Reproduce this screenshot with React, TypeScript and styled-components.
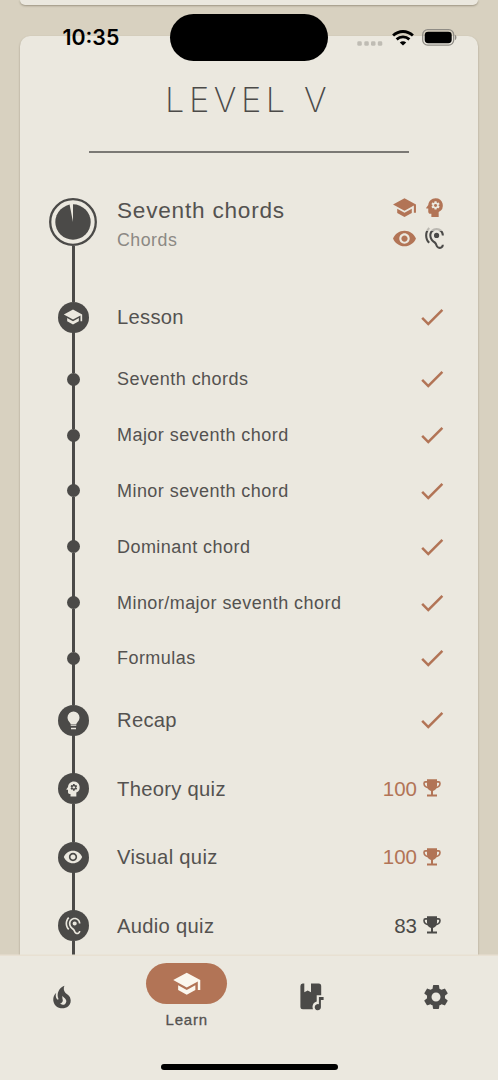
import React from "react";
import styled, { createGlobalStyle } from "styled-components";
import {
  MdSchool,
  MdPsychology,
  MdRemoveRedEye,
  MdHearing,
  MdCheck,
  MdSettings,
} from "react-icons/md";

const ink = "#4b4a48";
const textInk = "#545250";
const clay = "#b27456";
const paper = "#ebe8df";
const sand = "#d8d1c0";

const GlobalStyle = createGlobalStyle`
  * { box-sizing: border-box; }
  body { margin: 0; background: ${sand}; }
  svg { display: block; flex: none; }
`;

const Screen = styled.div`
  position: relative;
  width: 498px;
  height: 1080px;
  overflow: hidden;
  display: flex;
  flex-direction: column;
  background: ${sand};
  color: ${ink};
  font-family: "Liberation Sans", Arial, sans-serif;
`;

const Scroll = styled.main`
  flex: 1;
  min-height: 0;
  overflow: hidden;
  padding: 0 20px;
`;

const Card = styled.section`
  background: ${paper};
  border-radius: 10px;
  box-shadow: 0 1px 2px rgba(70, 60, 40, 0.4);
`;

const PreviousCard = styled(Card)`
  height: 5px;
  margin-bottom: 31px;
  border-radius: 0 0 10px 10px;
`;

const LevelCard = styled(Card)`
  height: 960px;
  padding: 42px 34px 0 29px;
`;

const LevelTitle = styled.h1`
  margin: 0;
  padding-left: 3px;
  height: 44px;
  text-align: center;
  font: 200 34.5px/44px Inter, sans-serif;
  letter-spacing: 4.5px;
`;

const Rule = styled.hr`
  width: 320px;
  height: 2px;
  margin: 29px 0 0 40px;
  border: 0;
  background: #7b7975;
`;

const Timeline = styled.div`
  margin-top: 40px;
`;

const Row = styled.div<{ $h: number }>`
  display: flex;
  align-items: center;
  height: ${(p) => p.$h}px;
`;

const Rail = styled.div`
  width: 48px;
  height: 100%;
  margin-right: 20px;
  display: flex;
  flex-direction: column;
  align-items: center;
  flex: none;
`;

const Line = styled.span<{ $hidden?: boolean }>`
  flex: 1;
  width: 3px;
  background: ${(p) => (p.$hidden ? "transparent" : ink)};
`;

const Node = styled.span<{ $size: number }>`
  width: ${(p) => p.$size}px;
  height: ${(p) => p.$size}px;
  border-radius: 50%;
  margin: -0.5px 0;
  background: ${ink};
  color: ${paper};
  display: flex;
  align-items: center;
  justify-content: center;
`;

const Label = styled.span<{ $size: number; $spacing: number }>`
  flex: 1;
  white-space: nowrap;
  color: ${textInk};
  font-size: ${(p) => p.$size}px;
  letter-spacing: ${(p) => p.$spacing}px;
  line-height: 28px;
`;

const TopicRow = styled.div`
  display: flex;
  height: 90px;
`;

const TopicText = styled.div`
  flex: 1;
  display: flex;
  flex-direction: column;
  padding-top: 3px;
`;

const TopicName = styled.h2`
  margin: 0;
  color: ${textInk};
  font-weight: 400;
  font-size: 22.6px;
  line-height: 29px;
  letter-spacing: 0.78px;
`;

const TopicGroup = styled.span`
  font-size: 17.8px;
  line-height: 30px;
  letter-spacing: 0.5px;
  color: #8c8984;
`;

const BadgeGrid = styled.div`
  display: grid;
  grid-template-columns: 25px 25px;
  column-gap: 5.5px;
  row-gap: 5.5px;
  align-content: start;
  padding-top: 2px;
  margin-right: -3px;
  color: ${clay};
`;

const PartialBadge = styled.span`
  color: ${ink};
  mask-image: linear-gradient(rgba(0, 0, 0, 0.3) 18%, #000 19%);
`;

const Status = styled.span<{ $done?: boolean }>`
  display: flex;
  align-items: center;
  gap: 6px;
  font-size: 20.5px;
  color: ${(p) => (p.$done ? clay : ink)};
`;

const CheckSlot = styled.span`
  margin-right: -3px;
`;

const TrophySlot = styled.span`
  padding: 0 3px 1px 0;
`;

const StatusBar = styled.header`
  position: absolute;
  inset: 14px 0 auto 0;
  height: 47px;
  display: flex;
  align-items: center;
  color: #000;
`;

const Clock = styled.time`
  width: 170px;
  padding: 0 0 1px 62.5px;
  font: 600 21.3px/26px Inter, sans-serif;
`;

const Island = styled.span`
  width: 158px;
  height: 47px;
  border-radius: 24px;
  background: #000;
`;

const Signals = styled.span`
  display: flex;
  align-items: center;
  gap: 8.5px;
  margin-left: 29px;
`;

const DotSlot = styled.span`
  padding-top: 11px;
`;

const NavBar = styled.nav`
  position: relative;
  height: 125px;
  display: grid;
  grid-template-columns: repeat(4, 1fr);
  align-items: start;
  background: ${paper};
  border-top: 1px solid #e8e0d2;
  box-shadow: 0 -1px 0 rgba(232, 224, 210, 0.5);
`;

const Tab = styled.div`
  height: 82px;
  display: flex;
  align-items: center;
  justify-content: center;
`;

const LibraryTab = styled(Tab)`
  padding-left: 2px;
`;

const ActiveTab = styled.div`
  padding-top: 7px;
  display: flex;
  flex-direction: column;
  align-items: center;
  font: 500 15px/18px "Liberation Sans", Arial, sans-serif;
  letter-spacing: 0.85px;
  color: ${textInk};
  -webkit-text-stroke: 0.3px ${textInk};
`;

const Pill = styled.span`
  width: 81px;
  height: 41px;
  margin-bottom: 7px;
  border-radius: 21px;
  background: ${clay};
  color: #fbf7ee;
  display: flex;
  align-items: center;
  justify-content: center;
`;

const HomeIndicator = styled.span`
  position: absolute;
  left: 160.5px;
  bottom: 10px;
  width: 177px;
  height: 6.5px;
  border-radius: 4px;
  background: #000;
`;

const ProgressDial = () => (
  <svg width="48" height="48" viewBox="0 0 48 48">
    <circle cx="24" cy="24" r="22.8" fill="none" stroke={ink} strokeWidth="2.3" />
    <circle cx="24" cy="24" r="17.7" fill={ink} />
    <path d="M24 24 L20.4 5.5 H24 Z" fill={paper} />
  </svg>
);

const Bulb = () => (
  <svg width="13" height="19" viewBox="0 0 13 19" fill="currentColor">
    <path d="M6.500.6a6 6 0 0 1 6 6c0 2.300-1.200 3.900-2.400 5.100-.5.600-.7 1.100-.8 1.900H3.700c-.1-.8-.3-1.300-.8-1.900C1.700 10.500.5 8.900.5 6.600a6 6 0 0 1 6-6z" />
    <path d="M3.700 14.200h5.600v.9H3.700zM4 16.800h5v1.500H4z" />
  </svg>
);

const Flame = () => (
  <svg width="30" height="30" viewBox="0 0 24 24" fill="currentColor">
    <path d="M17.66 11.2c-.23-.3-.51-.56-.77-.82-.67-.6-1.43-1.03-2.07-1.66C13.33 7.26 13 4.85 13.95 3c-.95.23-1.78.75-2.49 1.32-2.59 2.08-3.61 5.75-2.39 8.9.04.1.08.2.08.33 0 .22-.15.42-.35.5-.23.1-.47.04-.66-.12a.58.58 0 0 1-.14-.17c-1.13-1.43-1.31-3.48-.55-5.12C5.78 10 4.87 12.3 5 14.47c.06.5.12 1 .29 1.5.14.6.41 1.2.71 1.73 1.08 1.73 2.95 2.97 4.96 3.22 2.14.27 4.43-.12 6.07-1.6 1.83-1.66 2.47-4.32 1.53-6.6l-.13-.26c-.21-.46-.77-1.26-.77-1.26m-3.16 6.3c-.28.24-.74.5-1.1.6-1.12.4-2.24-.16-2.9-.82 1.19-.28 1.9-1.16 2.11-2.05.17-.8-.15-1.46-.28-2.23-.12-.74-.1-1.37.17-2.06.19.38.39.76.63 1.06.77 1 1.98 1.44 2.24 2.8.04.14.06.28.06.43.03.82-.33 1.72-.93 2.27Z" />
  </svg>
);

const Trophy = () => (
  <svg width="18" height="18" viewBox="0 0 18 18" fill="currentColor">
    <path d="M4 .3h10v6.500c0 2.600-1.900 4.700-4 5.300v3.500h4v1.900H4v-1.900h4v-3.500C5.900 11.500 4 9.400 4 6.800z" />
    <path
      d="M4.600 2.900H2.500C1.400 2.900 1 3.500 1 4.500C1.100 6.800 2.700 8.300 5.200 8.600M13.400 2.900h2.100c1.100 0 1.500.6 1.500 1.600C16.900 6.800 15.300 8.300 12.800 8.600"
      fill="none"
      stroke="currentColor"
      strokeWidth="1.600"
    />
  </svg>
);

const BookMusic = () => (
  <svg width="24" height="28" viewBox="0 0 24 28" fill="currentColor">
    <path d="M2.600.6H4.300V9.300L7.700 7.600L11 9.300V.6H18.500A2.600 2.600 0 0 1 21.200 3.200V12.200H16.700V18.500C14.300 19 12.500 21.200 12.500 23.700C12.500 24.700 12.700 25.500 13 26.200H2.900A2.500 2.500 0 0 1 .4 23.700V3A2.500 2.500 0 0 1 2.600.6Z" />
    <path d="M18.900 14H23.600V17H20.900V24.200A3.100 3.100 0 1 1 18.900 21.300Z" />
  </svg>
);

const Wifi = () => (
  <svg width="22" height="16" viewBox="0 0 22 16" fill="none" stroke="#000" strokeWidth="2.800">
    <path d="M1.100 5.600C6.800.1 15.200.1 20.900 5.600" />
    <path d="M4.600 9.400C8.300 6 13.700 6 17.400 9.400" />
    <path d="M11 15.600L7.800 12.500C9.600 10.900 12.400 10.900 14.200 12.500Z" fill="#000" stroke="none" />
  </svg>
);

const SignalDots = () => (
  <svg width="26" height="5" viewBox="0 0 26 5" fill="#bfbcb4">
    {[0, 7, 13.700, 20.500].map((x) => (
      <rect key={x} x={x + 0.3} y="0.3" width="4.500" height="4.500" rx="1.400" />
    ))}
  </svg>
);

const Battery = () => (
  <svg width="36" height="17" viewBox="0 0 36 17">
    <rect x=".7" y=".7" width="31" height="15.400" rx="5" fill="none" stroke="#8f8c85" strokeWidth="1.300" />
    <rect x="2.700" y="2.700" width="27" height="11.500" rx="3.400" fill="#000" />
    <path d="M33 5.700c1.900.7 1.900 4.700 0 5.400z" fill="#8f8c85" />
  </svg>
);

type Step = { label: string; icon?: React.ReactNode; score?: number };

const steps: Step[] = [
  { label: "Lesson", icon: <MdSchool size={20} /> },
  { label: "Seventh chords" },
  { label: "Major seventh chord" },
  { label: "Minor seventh chord" },
  { label: "Dominant chord" },
  { label: "Minor/major seventh chord" },
  { label: "Formulas" },
  { label: "Recap", icon: <Bulb /> },
  { label: "Theory quiz", icon: <MdPsychology size={20} />, score: 100 },
  { label: "Visual quiz", icon: <MdRemoveRedEye size={20} />, score: 100 },
  { label: "Audio quiz", icon: <MdHearing size={20} />, score: 83 },
];

const StepRow = ({ label, icon, score }: Step) => (
  <Row $h={icon ? 68.450 : 55.800}>
    <Rail>
      <Line />
      <Node $size={icon ? 31 : 13}>{icon}</Node>
      <Line />
    </Rail>
    <Label $size={icon ? 20.200 : 18} $spacing={icon ? 0.3 : 0.45}>
      {label}
    </Label>
    {score === undefined ? (
      <Status $done>
        <CheckSlot>
          <MdCheck size={30} />
        </CheckSlot>
      </Status>
    ) : (
      <Status $done={score === 100}>
        {score}
        <TrophySlot>
          <Trophy />
        </TrophySlot>
      </Status>
    )}
  </Row>
);

export default function App() {
  return (
    <Screen>
      <GlobalStyle />
      <Scroll>
        <PreviousCard />
        <LevelCard>
          <LevelTitle>LEVEL V</LevelTitle>
          <Rule />
          <Timeline>
            <TopicRow>
              <Rail>
                <Line $hidden style={{ flex: "0 0 5px" }} />
                <ProgressDial />
                <Line />
              </Rail>
              <TopicText>
                <TopicName>Seventh chords</TopicName>
                <TopicGroup>Chords</TopicGroup>
              </TopicText>
              <BadgeGrid>
                <MdSchool size={25} />
                <MdPsychology size={25} />
                <MdRemoveRedEye size={25} />
                <PartialBadge>
                  <MdHearing size={25} />
                </PartialBadge>
              </BadgeGrid>
            </TopicRow>
            {steps.map((step) => (
              <StepRow key={step.label} {...step} />
            ))}
          </Timeline>
        </LevelCard>
      </Scroll>
      <NavBar>
        <Tab>
          <Flame />
        </Tab>
        <ActiveTab>
          <Pill>
            <MdSchool size={29.500} />
          </Pill>
          Learn
        </ActiveTab>
        <LibraryTab>
          <BookMusic />
        </LibraryTab>
        <Tab>
          <MdSettings size={30} />
        </Tab>
        <HomeIndicator />
      </NavBar>
      <StatusBar>
        <Clock>10:35</Clock>
        <Island />
        <Signals>
          <DotSlot>
            <SignalDots />
          </DotSlot>
          <Wifi />
          <Battery />
        </Signals>
      </StatusBar>
    </Screen>
  );
}
